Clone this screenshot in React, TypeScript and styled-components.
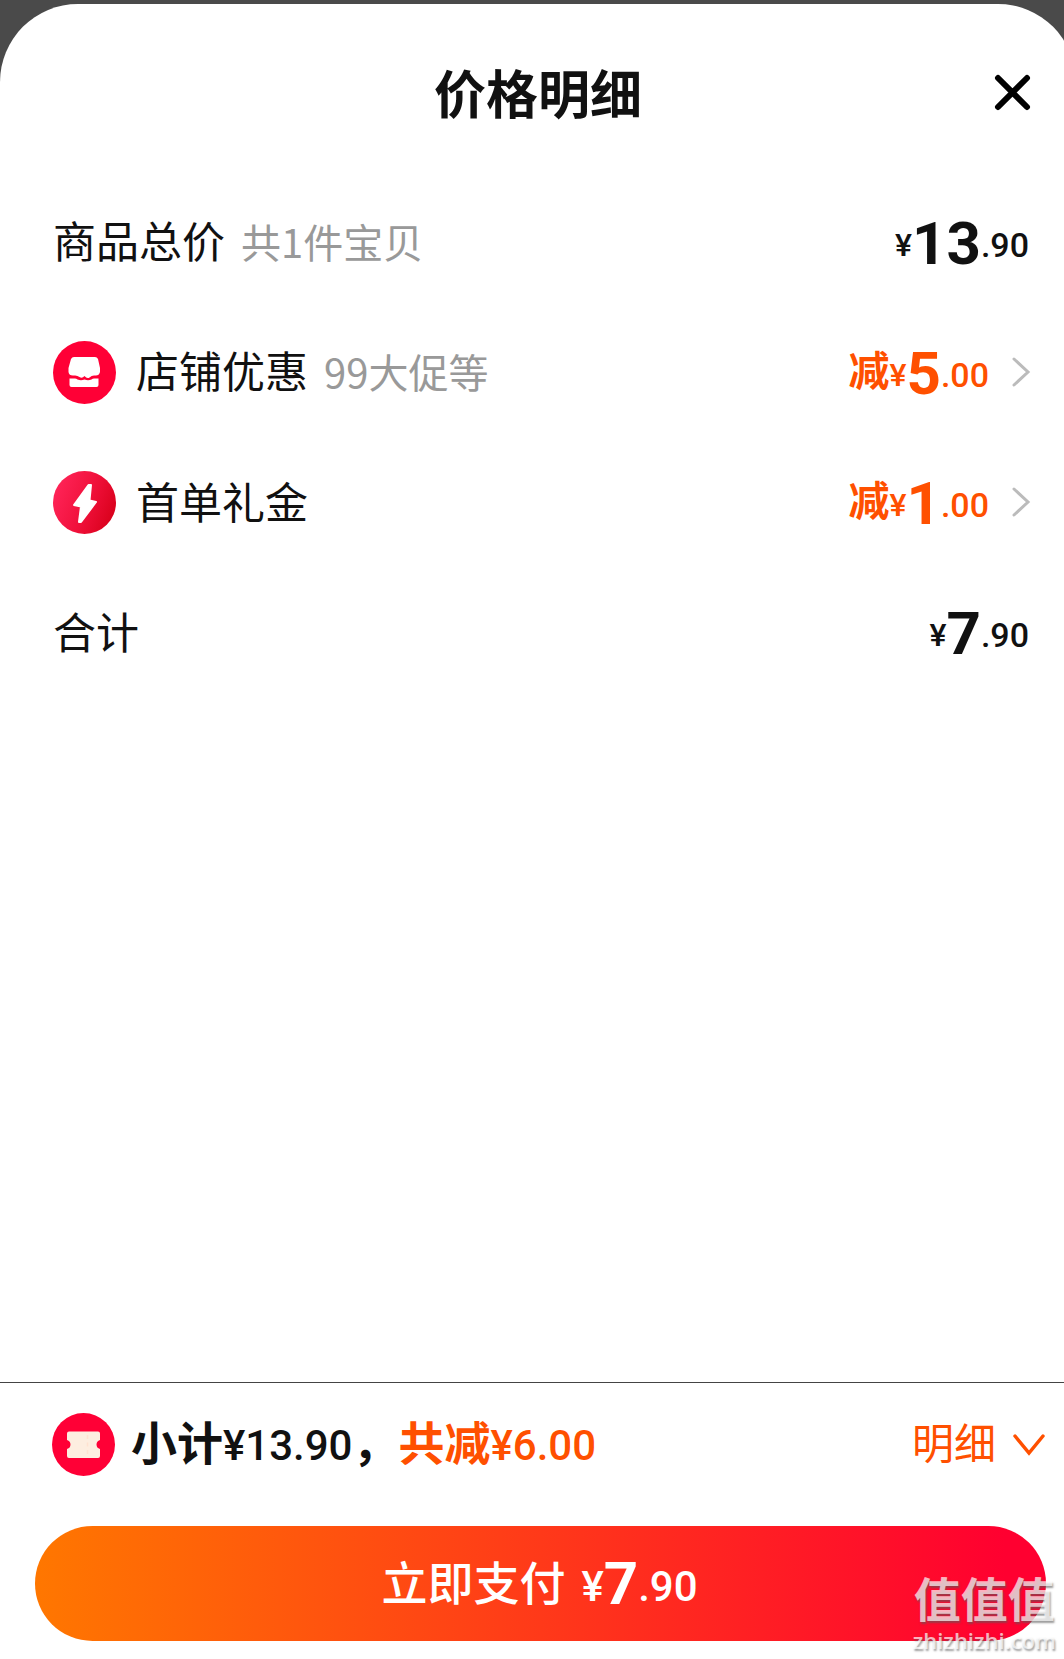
import React from "react";
import styled, { createGlobalStyle } from "styled-components";

const INK = "#111111";
const ORANGE = "#ff5000";
const MUTED = "#999999";

const GlobalStyle = createGlobalStyle`
  *, *::before, *::after { box-sizing: border-box; }
  body {
    margin: 0;
    background: #4a4a4a;
    color: ${INK};
    font-family: Roboto, "Noto Sans CJK SC", sans-serif;
  }
  h1, ul, p { margin: 0; padding: 0; }
  button {
    border: 0;
    padding: 0;
    background: none;
    color: inherit;
    font: inherit;
    cursor: pointer;
  }
  svg { display: block; flex: none; }
`;

const Backdrop = styled.div`
  position: relative;
  display: flex;
  flex-direction: column;
  min-height: 100vh;
  padding-top: 4px;
  overflow: hidden;
  background: #4a4a4a;
`;

const Sheet = styled.main`
  flex: 1;
  display: flex;
  flex-direction: column;
  margin-right: -12px;
  border-radius: 78px 78px 0 0;
  background: #ffffff;
`;

const Header = styled.header`
  display: grid;
  grid-template-columns: 1fr auto 1fr;
  align-items: center;
  height: 173px;
  padding: 8px 40px 0;
`;

const Title = styled.h1`
  grid-column: 2;
  padding-top: 4px;
  font-size: 52px;
  font-weight: 700;
  line-height: 60px;
`;

const CloseButton = styled.button`
  justify-self: end;
`;

const Lines = styled.ul`
  flex: 1;
  list-style: none;
`;

const Line = styled.li`
  display: flex;
  align-items: center;
  justify-content: space-between;
  height: 130px;
  padding: 0 45px 0 53px;
`;

const Label = styled.div`
  display: flex;
  align-items: center;
  font-family: "Noto Sans CJK SC", sans-serif;
  font-size: 43px;
  line-height: 60px;

  svg { margin-right: 20px; }
`;

const LabelText = styled.span`
  padding-bottom: 4px;
`;

const Note = styled.span`
  margin-left: 16px;
  color: ${MUTED};
  font-size: 40px;
`;

const DetailButton = styled.button`
  display: flex;
  align-items: center;
  gap: 20px;
`;

const Price = styled.span<{ $color?: string }>`
  display: flex;
  align-items: flex-end;
  height: 60px;
  padding-right: 2px;
  color: ${(p) => p.$color ?? INK};
`;

const Prefix = styled.span`
  font-size: 41px;
  font-weight: 700;
  line-height: 60px;
`;

const Yen = styled.span`
  font-size: 32px;
  font-weight: 500;
  line-height: 54px;
`;

const Whole = styled.span`
  font-size: 60px;
  font-weight: 700;
  line-height: 56px;
`;

const Cents = styled(Yen)`
  font-size: 34px;
`;

const Footer = styled.footer`
  display: flex;
  flex-direction: column;
  gap: 50px;
  padding: 30px 30px 18px 35px;
  border-top: 1px solid #444444;
`;

const Summary = styled.div`
  display: flex;
  align-items: center;
  justify-content: space-between;
  height: 63px;
  padding-left: 17px;
`;

const Subtotal = styled.p`
  display: flex;
  align-items: center;
  gap: 16px;
  font-size: 46px;
  font-weight: 700;
  line-height: 60px;
`;

const Figure = styled.span`
  font-size: 42px;
  font-weight: 500;
`;

const Saved = styled.span`
  color: ${ORANGE};
`;

const MoreButton = styled.button`
  display: flex;
  align-items: center;
  gap: 16px;
  color: ${ORANGE};
  font-size: 42px;
  line-height: 60px;
`;

const PayButton = styled.button`
  display: flex;
  align-items: center;
  justify-content: center;
  gap: 16px;
  height: 115px;
  border-radius: 58px;
  background: linear-gradient(90deg, #ff7700 0%, #ff0030 96%);
  color: #ffffff;
  font-size: 46px;
  font-weight: 500;
  line-height: 60px;

  ${Yen}, ${Cents} { font-size: 42px; line-height: 54px; }
  ${Whole} { line-height: 60px; }
`;

const Watermark = styled.div`
  position: absolute;
  right: 8px;
  bottom: 5px;
  display: flex;
  flex-direction: column;
  align-items: center;
  color: rgba(255, 255, 255, 0.7);
  text-shadow: 1px 2px 2px rgba(90, 90, 90, 0.6);
  pointer-events: none;
`;

const WatermarkName = styled.span`
  font-size: 47px;
  font-weight: 700;
  line-height: 50px;
`;

const WatermarkSite = styled.span`
  font-family: "Open Sans", sans-serif;
  font-size: 22px;
  font-weight: 600;
  line-height: 28px;
`;

const CloseIcon = () => (
  <svg width="48" height="48" viewBox="0 0 48 48" fill="none" stroke="#000" strokeWidth="6" strokeLinecap="round" aria-hidden="true">
    <path d="M10 7 L39 36 M39 7 L10 36" />
  </svg>
);

const StoreIcon = () => (
  <svg width="63" height="63" viewBox="0 0 63 63" aria-hidden="true">
    <circle cx="31.500" cy="31.500" r="31.500" fill="#ff0036" />
    <path d="M21 16H42Q44 16 45 18L47 27V31Q46 35 42 34.500Q39 34 36.500 36.500Q34 38 31.500 35Q29 38 26.500 36Q24 34 21 34.500Q16 35 15.500 31V27L18 18Q19 16 21 16Z" fill="#fff" />
    <path d="M16.500 37.500H21Q23 37 24.500 38.500Q28 40 31.500 38.500Q35 40 38.500 38.500Q40 37 42 37.500H45.500V44Q45.500 46 43.500 46H18.500Q16.500 46 16.500 44Z" fill="#fff" />
  </svg>
);

const BoltIcon = () => (
  <svg width="63" height="63" viewBox="0 0 63 63" aria-hidden="true">
    <defs>
      <linearGradient id="bolt-fill" x1="0" y1="0.3" x2="1" y2="0.7">
        <stop offset="0" stopColor="#ff2458" />
        <stop offset="0.55" stopColor="#f0103a" />
        <stop offset="1" stopColor="#d8001a" />
      </linearGradient>
    </defs>
    <circle cx="31.500" cy="31.500" r="31.500" fill="url(#bolt-fill)" />
    <path d="M35.500 14L38 14L36.500 29.500L43 31L28 51L26 51L28 35.500L21 34Z" fill="#fff" stroke="#fff" strokeWidth="2" strokeLinejoin="round" />
  </svg>
);

const TicketIcon = () => (
  <svg width="63" height="63" viewBox="0 0 63 63" aria-hidden="true">
    <circle cx="31.500" cy="31.500" r="31.500" fill="#ff0036" />
    <path d="M17 18.500H46Q48 18.500 48 20.500V27Q44.500 28 44.500 31.500Q44.500 35 48 36V43Q48 45 46 45H17Q15 45 15 43V36Q18.500 35 18.500 31.500Q18.500 28 15 27V20.500Q15 18.500 17 18.500Z" fill="#fdeee0" />
    <path d="M35.500 22V26M35.500 29.500V33.500M35.500 37V41" stroke="#ffe2d0" strokeWidth="1.500" />
  </svg>
);

const ChevronRight = () => (
  <svg width="20" height="32" viewBox="0 0 20 32" fill="none" stroke="#bbbbbb" strokeWidth="3" strokeLinecap="round" aria-hidden="true">
    <path d="M3 3L17 16L3 29" />
  </svg>
);

const ChevronDown = () => (
  <svg width="34" height="26" viewBox="0 0 34 26" fill="none" stroke={ORANGE} strokeWidth="3.500" strokeLinecap="round" aria-hidden="true">
    <path d="M3 4L17 21L31 4" />
  </svg>
);

type AmountProps = { whole: string; cents: string; off?: boolean; color?: string };

const Amount = ({ whole, cents, off, color }: AmountProps) => (
  <Price $color={off ? ORANGE : color}>
    {off && <Prefix>减</Prefix>}
    <Yen>¥</Yen>
    <Whole>{whole}</Whole>
    <Cents>.{cents}</Cents>
  </Price>
);

type LineItem = {
  label: string;
  note?: string;
  icon?: React.ReactNode;
  whole: string;
  cents: string;
  off?: boolean;
};

const items: LineItem[] = [
  { label: "商品总价", note: "共1件宝贝", whole: "13", cents: "90" },
  { label: "店铺优惠", note: "99大促等", icon: <StoreIcon />, whole: "5", cents: "00", off: true },
  { label: "首单礼金", icon: <BoltIcon />, whole: "1", cents: "00", off: true },
  { label: "合计", whole: "7", cents: "90" },
];

export default function App() {
  return (
    <Backdrop>
      <GlobalStyle />
      <Sheet>
        <Header>
          <Title>价格明细</Title>
          <CloseButton type="button" aria-label="关闭">
            <CloseIcon />
          </CloseButton>
        </Header>
        <Lines>
          {items.map((item) => (
            <Line key={item.label}>
              <Label>
                {item.icon}
                <LabelText>
                  {item.label}
                  {item.note && <Note>{item.note}</Note>}
                </LabelText>
              </Label>
              {item.off ? (
                <DetailButton type="button">
                  <Amount whole={item.whole} cents={item.cents} off />
                  <ChevronRight />
                </DetailButton>
              ) : (
                <Amount whole={item.whole} cents={item.cents} />
              )}
            </Line>
          ))}
        </Lines>
        <Footer>
          <Summary>
            <Subtotal>
              <TicketIcon />
              <span>
                小计<Figure>¥13.90</Figure>，
                <Saved>
                  共减<Figure>¥6.00</Figure>
                </Saved>
              </span>
            </Subtotal>
            <MoreButton type="button">
              明细
              <ChevronDown />
            </MoreButton>
          </Summary>
          <PayButton type="button">
            立即支付
            <Amount whole="7" cents="90" color="#ffffff" />
          </PayButton>
        </Footer>
      </Sheet>
      <Watermark>
        <WatermarkName>值值值</WatermarkName>
        <WatermarkSite>zhizhizhi.com</WatermarkSite>
      </Watermark>
    </Backdrop>
  );
}
